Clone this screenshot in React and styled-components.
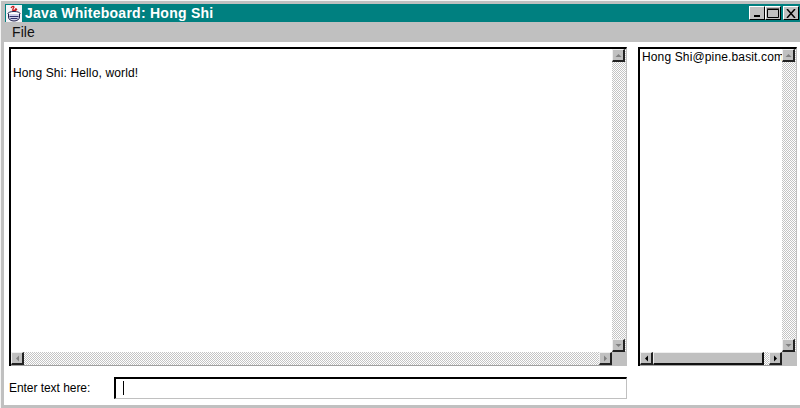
import React from 'react';
import styled, { createGlobalStyle } from 'styled-components';

const Global = createGlobalStyle`
  html, body {
    margin: 0;
    padding: 0;
    background: #fff;
  }
  body {
    font-family: "Liberation Sans", Arial, sans-serif;
  }
`;

const Frame = styled.div`
  width: 800px;
  height: 408px;
  box-sizing: border-box;
  display: flex;
  flex-direction: column;
  overflow: hidden;
  background: #c0c0c0;
  border-top: 1px solid #f4f4f4;
  border-left: 1px solid #f4f4f4;
  padding: 3px 0 0 3px;
`;

const TitleBar = styled.div`
  height: 18px;
  flex: none;
  display: flex;
  align-items: center;
  background: #008080;
  color: #fff;
  margin-left: 1px;
  padding: 0 1px 0 1px;
`;

const TitleText = styled.span`
  font-size: 14px;
  font-weight: bold;
  letter-spacing: 0.26px;
  margin-left: 3px;
  white-space: nowrap;
`;

const WinButtons = styled.div`
  margin-left: auto;
  display: flex;
`;

const WinButton = styled.div`
  width: 16px;
  height: 14px;
  margin-left: ${(props) => (props.gap ? '2px' : '0')};
  box-sizing: border-box;
  background: #c0c0c0;
  border-top: 1px solid #fff;
  border-left: 1px solid #fff;
  border-right: 1px solid #000;
  border-bottom: 1px solid #000;
  display: flex;
  align-items: center;
  justify-content: center;
`;

const MenuBar = styled.div`
  height: 20px;
  flex: none;
  background: #c0c0c0;
  display: flex;
  align-items: center;
  padding-left: 8px;
  font-size: 14px;
  color: #111;
  letter-spacing: 0.1px;
`;

const Content = styled.div`
  flex: 1;
  background: #fff;
  margin-bottom: 3px;
  display: flex;
  flex-direction: column;
  padding: 5px 3px 0 5px;
`;

const Panels = styled.div`
  display: flex;
  gap: 11px;
  height: 319px;
`;

const ListBox = styled.div`
  width: ${(props) => props.width}px;
  box-sizing: border-box;
  border-top: 2px solid #000;
  border-left: 2px solid #000;
  border-right: 1px solid #c0c0c0;
  display: grid;
  grid-template-columns: 1fr 14px;
  grid-template-rows: 1fr 14px;
  background: #fff;
`;

const TextArea = styled.div`
  overflow: hidden;
  font-size: 12px;
  letter-spacing: 0.14px;
  color: #000;
  white-space: nowrap;
  padding: ${(props) => props.pad};
  line-height: 14px;
`;

const VTrack = styled.div`
  display: flex;
  flex-direction: column;
  justify-content: space-between;
  background: repeating-conic-gradient(#c4c4c4 0 25%, #fff 0 50%) 0 0 / 2px 2px;
`;

const HTrack = styled.div`
  display: flex;
  justify-content: space-between;
  align-items: stretch;
  background: repeating-conic-gradient(#c4c4c4 0 25%, #fff 0 50%) 0 0 / 2px 2px;
  border-bottom: 1px solid #a0a0a0;
`;

const Corner = styled.div`
  background: #c0c0c0;
`;

const ScrollBtn = styled.div`
  width: 13px;
  height: 13px;
  box-sizing: border-box;
  background: #c0c0c0;
  border-top: 1px solid #efefef;
  border-left: 1px solid #efefef;
  border-right: 2px solid #222;
  border-bottom: 2px solid #222;
  display: flex;
  align-items: center;
  justify-content: center;
  flex: none;
`;

const Thumb = styled.div`
  flex: 1;
  box-sizing: border-box;
  background: #c0c0c0;
  border-top: 1px solid #efefef;
  border-left: 1px solid #efefef;
  border-right: 2px solid #111;
  border-bottom: 2px solid #111;
  margin-right: 5px;
`;

const InputRow = styled.div`
  display: flex;
  align-items: center;
  margin-top: 11px;
  height: 22px;
`;

const Label = styled.label`
  width: 105px;
  box-sizing: border-box;
  font-size: 12px;
  letter-spacing: -0.05px;
  color: #000;
  flex: none;
`;

const TextBox = styled.div`
  width: 513px;
  height: 22px;
  box-sizing: border-box;
  border-top: 2px solid #000;
  border-left: 2px solid #000;
  border-right: 1px solid #c0c0c0;
  border-bottom: 1px solid #c0c0c0;
  padding: 2px 0 3px 7px;
  display: flex;
`;

const Caret = styled.div`
  width: 1px;
  background: #000;
`;

const Arrow = ({ dir, color = '#808080' }) => {
  const pts = {
    up: '3.5,1 0.5,4 6.5,4',
    down: '0.5,1 6.5,1 3.5,4',
    left: '4,0.5 4,6.5 1,3.5',
    right: '1,0.5 1,6.5 4,3.5',
  }[dir];
  const vertical = dir === 'up' || dir === 'down';
  return (
    <svg width={vertical ? 7 : 5} height={vertical ? 5 : 7}>
      <polygon points={pts} fill={color} />
    </svg>
  );
};

const AppIcon = () => (
  <svg width="16" height="17" viewBox="0 0 16 17">
    <rect width="16" height="17" fill="#f4f4f8" />
    <path d="M5 3c1-2 3-2 3-1s-2 2-1 3 3 0 3-2M6 5c2 1 4 1 5-1" stroke="#c81818" strokeWidth="1.2" fill="none" />
    <ellipse cx="8" cy="8.5" rx="6" ry="2" fill="#fff" stroke="#20204a" />
    <path d="M2.5 9v3c0 2.5 2.5 4 5.5 4s5.500-1.500 5.500-4V9" fill="#d0d0e8" stroke="#20204a" />
    <path d="M3.500 11.500h9M4.500 13.500h7" stroke="#30306a" />
  </svg>
);

const ScrollBar = ({ kind, muted }) => {
  const color = muted ? '#808080' : '#000';
  if (kind === 'v') {
    return (
      <VTrack>
        <ScrollBtn><Arrow dir="up" /></ScrollBtn>
        <ScrollBtn><Arrow dir="down" /></ScrollBtn>
      </VTrack>
    );
  }
  return (
    <HTrack>
      <ScrollBtn><Arrow dir="left" color={color} /></ScrollBtn>
      {!muted && <Thumb />}
      <ScrollBtn><Arrow dir="right" color={color} /></ScrollBtn>
    </HTrack>
  );
};

export default function App() {
  return (
    <>
      <Global />
      <Frame>
        <TitleBar>
          <AppIcon />
          <TitleText>Java Whiteboard: Hong Shi</TitleText>
          <WinButtons>
            <WinButton>
              <svg width="9" height="8"><rect x="1" y="6" width="6" height="2" fill="#000" /></svg>
            </WinButton>
            <WinButton>
              <svg width="12" height="10"><path d="M0.500 1.500h11v8h-11z" fill="none" stroke="#000" /><path d="M0 1h12" stroke="#000" /></svg>
            </WinButton>
            <WinButton gap>
              <svg width="10" height="9"><path d="M1 0l8 9M9 0l-8 9" stroke="#000" strokeWidth="1.5" /></svg>
            </WinButton>
          </WinButtons>
        </TitleBar>
        <MenuBar>File</MenuBar>
        <Content>
          <Panels>
            <ListBox width={618}>
              <TextArea pad="17px 0 0 2px">Hong Shi: Hello, world!</TextArea>
              <ScrollBar kind="v" />
              <ScrollBar kind="h" muted />
              <Corner />
            </ListBox>
            <ListBox width={159}>
              <TextArea pad="1px 0 0 2px">Hong Shi@pine.basit.com</TextArea>
              <ScrollBar kind="v" />
              <ScrollBar kind="h" />
              <Corner />
            </ListBox>
          </Panels>
          <InputRow>
            <Label>Enter text here:</Label>
            <TextBox><Caret /></TextBox>
          </InputRow>
        </Content>
      </Frame>
    </>
  );
}
